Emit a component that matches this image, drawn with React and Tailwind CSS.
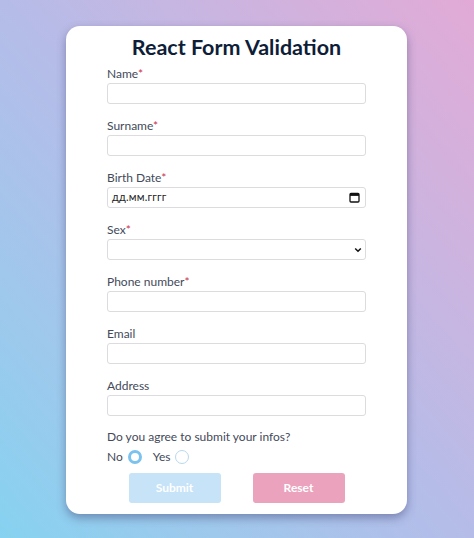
import { useState } from 'react';

const fields = [
  { id: 'name', label: 'Name', required: true },
  { id: 'surname', label: 'Surname', required: true },
  { id: 'birth', label: 'Birth Date', required: true, type: 'date' },
  { id: 'sex', label: 'Sex', required: true, type: 'select' },
  { id: 'phone', label: 'Phone number', required: true },
  { id: 'email', label: 'Email' },
  { id: 'address', label: 'Address' },
];

function CalendarIcon() {
  return (
    <svg width="11" height="11" viewBox="0 0 11 11" fill="none">
      <rect x="1" y="1.5" width="9" height="8.5" rx="1" stroke="#111" strokeWidth="1.3" />
      <rect x="1" y="1.5" width="9" height="2.4" fill="#111" />
    </svg>
  );
}

function Chevron() {
  return (
    <svg width="8" height="6" viewBox="0 0 8 6" fill="none">
      <path d="M1.2 1.5 L4 4.3 L6.8 1.5" stroke="#111" strokeWidth="1.5" />
    </svg>
  );
}

function Field({ field }) {
  const box = 'h-[21px] w-full rounded-[3px] border border-[#dcdcdf] bg-white';
  return (
    <div className="flex flex-col mb-[13px]">
      <label className="h-[16px] leading-[16px] text-[12px] text-[#434a5a] mt-[1px] mb-[1px]">
        {field.label}
        {field.required && <span className="text-[#c8324e]">*</span>}
      </label>
      {field.type === 'date' ? (
        <div className={`${box} flex items-center justify-between pl-[4px] pr-[5px]`}>
          <span className="text-[11px] text-[#222] tracking-[0.2px]">дд.мм.гггг</span>
          <CalendarIcon />
        </div>
      ) : field.type === 'select' ? (
        <div className={`${box} flex items-center justify-end pr-[3px]`}>
          <Chevron />
        </div>
      ) : (
        <input className={`${box} outline-none px-[4px] text-[12px]`} />
      )}
    </div>
  );
}

export default function App() {
  const [agree, setAgree] = useState('no');

  return (
    <div
      className="h-[538px] w-full overflow-hidden bg-linear-to-bl from-[#e2aad6] via-[#b5bce8] to-[#86d2f0] pt-[26px]"
      style={{ fontFamily: 'Lato, "Open Sans", sans-serif' }}
    >
      <div className="ml-[66px] w-[341px] h-[488px] bg-white rounded-[14px] shadow-[0_4px_10px_rgba(60,60,110,0.45)] pt-[7px] px-[41px] pb-[10px]">
        <h1 className="text-center text-[21.5px] leading-[28px] font-bold text-[#0f1e38] mb-[4px]">
          React Form Validation
        </h1>

        {fields.map(f => (
          <Field key={f.id} field={f} />
        ))}

        <p className="mt-[1px] h-[16px] leading-[16px] text-[12px] text-[#434a5a]">
          Do you agree to submit your infos?
        </p>

        <div className="flex items-center h-[16px] mt-[4px] text-[12px] text-[#434a5a]">
          <span>No</span>
          <span
            onClick={() => setAgree('no')}
            className="ml-[5px] w-[14px] h-[14px] rounded-full border-[3px] border-[#7cc2ee] bg-white"
          />
          <span className="ml-[11px]">Yes</span>
          <span
            onClick={() => setAgree('yes')}
            className="ml-[4px] w-[14px] h-[14px] rounded-full border border-[#b8d8ee] bg-white"
          />
        </div>

        <div className="flex justify-center gap-8 mt-[8px]">
          <button className="w-[92px] h-[30px] rounded-[3px] bg-[#c6e3f8] text-white text-[12px] font-bold">
            Submit
          </button>
          <button className="w-[92px] h-[30px] rounded-[3px] bg-[#eba3bd] text-white text-[12px] font-bold">
            Reset
          </button>
        </div>
      </div>
    </div>
  );
}
